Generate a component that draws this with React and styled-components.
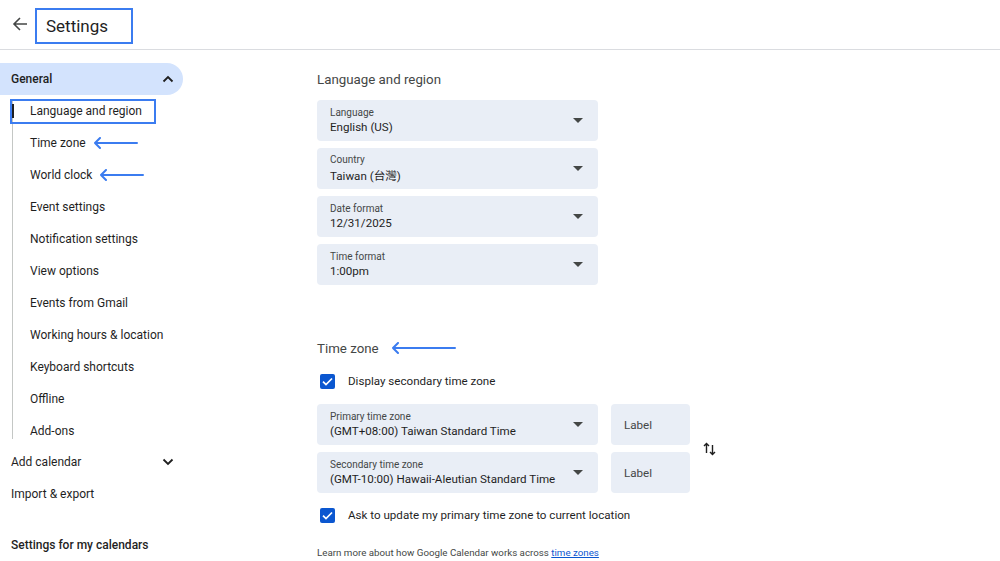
import React from 'react';
import styled, { createGlobalStyle } from 'styled-components';

const GlobalStyle = createGlobalStyle`
  body {
    margin: 0;
    background: #fff;
    font-family: Roboto, "Noto Sans", "Noto Sans CJK TC", sans-serif;
    color: #1f1f1f;
  }
`;

const ANNOT = '#3b7cf0';

const subItems = [
  'Language and region',
  'Time zone',
  'World clock',
  'Event settings',
  'Notification settings',
  'View options',
  'Events from Gmail',
  'Working hours & location',
  'Keyboard shortcuts',
  'Offline',
  'Add-ons',
];

const langFields = [
  { label: 'Language', value: 'English (US)' },
  { label: 'Country', value: 'Taiwan (台灣)' },
  { label: 'Date format', value: '12/31/2025' },
  { label: 'Time format', value: '1:00pm' },
];

function Arrow({ width = 46 }) {
  return (
    <svg width={width} height="12" viewBox={`0 0 ${width} 12`}>
      <path
        d={`M${width - 1} 6H2M7 1L2 6l5 5`}
        fill="none"
        stroke={ANNOT}
        strokeWidth="2"
        strokeLinecap="round"
        strokeLinejoin="round"
      />
    </svg>
  );
}

function Caret() {
  return (
    <svg width="10" height="5" viewBox="0 0 10 5">
      <path d="M0 0h10L5 5z" fill="#444746" />
    </svg>
  );
}

function Chevron({ up }) {
  return (
    <svg width="12" height="8" viewBox="0 0 12 8">
      <path
        d={up ? 'M1.5 6.5L6 2l4.5 4.5' : 'M1.5 1.5L6 6l4.5-4.5'}
        fill="none"
        stroke="#1f1f1f"
        strokeWidth="1.8"
      />
    </svg>
  );
}

function Check() {
  return (
    <CheckBox>
      <svg width="11" height="9" viewBox="0 0 11 9">
        <path d="M1 4.6l3 3L10 1.5" fill="none" stroke="#fff" strokeWidth="1.7" />
      </svg>
    </CheckBox>
  );
}

function Select({ label, value }) {
  return (
    <Field>
      <FieldText>
        <FieldLabel>{label}</FieldLabel>
        <FieldValue>{value}</FieldValue>
      </FieldText>
      <Caret />
    </Field>
  );
}

export default function App() {
  return (
    <>
      <GlobalStyle />
      <Header>
        <BackButton>
          <svg width="16" height="16" viewBox="0 0 16 16">
            <path
              d="M15 8H2M8 2L2 8l6 6"
              fill="none"
              stroke="#444746"
              strokeWidth="1.6"
            />
          </svg>
        </BackButton>
        <Title>Settings</Title>
      </Header>
      <Page>
        <Sidebar>
          <GroupHeader active>
            General
            <Chevron up />
          </GroupHeader>
          <SubList>
            {subItems.map((item, i) => (
              <SubItem key={item} selected={i === 0}>
                <SubText boxed={i === 0}>{item}</SubText>
                {(i === 1 || i === 2) && <Arrow width={45} />}
              </SubItem>
            ))}
          </SubList>
          <GroupHeader>
            Add calendar
            <Chevron />
          </GroupHeader>
          <GroupHeader>Import &amp; export</GroupHeader>
          <SectionLabel>Settings for my calendars</SectionLabel>
        </Sidebar>
        <Main>
          <Heading>Language and region</Heading>
          <FieldStack>
            {langFields.map((f) => (
              <Select key={f.label} label={f.label} value={f.value} />
            ))}
          </FieldStack>

          <Heading spaced>
            Time zone
            <Arrow width={65} />
          </Heading>
          <CheckRow>
            <Check />
            Display secondary time zone
          </CheckRow>
          <TzGrid>
            <Select label="Primary time zone" value="(GMT+08:00) Taiwan Standard Time" />
            <LabelBox>Label</LabelBox>
            <SwapIcon>
              <svg width="13" height="14" viewBox="0 0 13 14">
                <path
                  d="M3.5 11V1.5M1 4l2.5-2.5L6 4M9.5 3v9.5M7 10l2.5 2.5L12 10"
                  fill="none"
                  stroke="#1f1f1f"
                  strokeWidth="1.4"
                />
              </svg>
            </SwapIcon>
            <Select
              label="Secondary time zone"
              value="(GMT-10:00) Hawaii-Aleutian Standard Time"
            />
            <LabelBox>Label</LabelBox>
          </TzGrid>
          <CheckRow>
            <Check />
            Ask to update my primary time zone to current location
          </CheckRow>
          <Note>
            Learn more about how Google Calendar works across <a href="#tz">time zones</a>
          </Note>
        </Main>
      </Page>
    </>
  );
}

const Header = styled.header`
  height: 49px;
  display: flex;
  align-items: center;
  padding-left: 12px;
  border-bottom: 1px solid #dadce0;
  box-sizing: content-box;
`;

const BackButton = styled.div`
  width: 16px;
  height: 16px;
  display: flex;
  margin-right: 7px;
  margin-top: -1px;
`;

const Title = styled.h1`
  margin: 3px 0 0;
  width: 98px;
  height: 36px;
  box-sizing: border-box;
  border: 2px solid ${ANNOT};
  display: flex;
  align-items: center;
  padding-left: 9px;
  font-size: 17px;
  font-weight: 400;
  color: #1f1f1f;
`;

const Page = styled.div`
  display: flex;
`;

const Sidebar = styled.nav`
  width: 317px;
  flex-shrink: 0;
  padding-top: 13px;
`;

const GroupHeader = styled.div`
  width: 183px;
  height: 32px;
  box-sizing: border-box;
  display: flex;
  align-items: center;
  justify-content: space-between;
  padding: 0 9px 0 11px;
  border-radius: 0 16px 16px 0;
  background: ${(p) => (p.active ? '#d3e3fd' : 'transparent')};
  font-size: 12px;
  font-weight: ${(p) => (p.active ? 500 : 400)};
  color: #1f1f1f;
`;

const SubList = styled.div`
  position: relative;
  margin: 0 0 -1px 12px;

  &::before {
    content: '';
    position: absolute;
    left: 0;
    top: 4px;
    bottom: 8px;
    width: 1px;
    background: #c4c7c5;
  }
`;

const SubItem = styled.div`
  position: relative;
  height: 32px;
  display: flex;
  align-items: center;
  gap: 7px;
  padding-left: 18px;
  font-size: 12px;
  color: #1f1f1f;

  &::before {
    content: '';
    display: ${(p) => (p.selected ? 'block' : 'none')};
    position: absolute;
    left: 0;
    top: 9px;
    width: 2px;
    height: 14px;
    background: #1f1f1f;
  }
`;

const SubText = styled.span`
  ${(p) =>
    p.boxed &&
    `
    margin-left: -20px;
    padding: 3px 12px 4px 18px;
    border: 2px solid ${ANNOT};
  `}
`;

const SectionLabel = styled.div`
  margin-top: 28px;
  padding-left: 11px;
  font-size: 12px;
  font-weight: 500;
  color: #1f1f1f;
`;

const Main = styled.main`
  flex: 1;
  padding-top: 19px;
`;

const Heading = styled.h2`
  margin: ${(p) => (p.spaced ? '53px 0 13px' : '0 0 11px')};
  height: 20px;
  display: flex;
  align-items: center;
  gap: 12px;
  font-size: 13.3px;
  font-weight: 400;
  color: #444746;
`;

const FieldStack = styled.div`
  display: flex;
  flex-direction: column;
  gap: 7px;
  width: 281px;
`;

const Field = styled.div`
  height: 41px;
  box-sizing: border-box;
  background: #e9eef6;
  border-radius: 4px;
  display: flex;
  align-items: center;
  justify-content: space-between;
  padding: 0 15px 0 13px;
`;

const FieldText = styled.div`
  display: flex;
  flex-direction: column;
  gap: 2px;
`;

const FieldLabel = styled.span`
  font-size: 10px;
  color: #444746;
`;

const FieldValue = styled.span`
  font-size: 11.6px;
  color: #1f1f1f;
`;

const CheckRow = styled.label`
  display: flex;
  align-items: center;
  gap: 13px;
  padding-left: 3px;
  height: 20px;
  font-size: 11.6px;
  color: #1f1f1f;
`;

const CheckBox = styled.span`
  width: 15px;
  height: 15px;
  border-radius: 2px;
  background: #0b57d0;
  display: flex;
  align-items: center;
  justify-content: center;
`;

const TzGrid = styled.div`
  display: grid;
  grid-template-columns: 281px 79px auto;
  grid-template-rows: 41px 41px;
  column-gap: 13px;
  row-gap: 7px;
  margin: 13px 0 12px;
`;

const LabelBox = styled.div`
  background: #e9eef6;
  border-radius: 4px;
  display: flex;
  align-items: center;
  padding-left: 13px;
  font-size: 11.6px;
  color: #444746;
`;

const SwapIcon = styled.div`
  grid-row: 1 / span 2;
  grid-column: 3;
  align-self: center;
  display: flex;
`;

const Note = styled.p`
  margin: 22px 0 0;
  font-size: 9.75px;
  color: #444746;

  a {
    color: #0b57d0;
  }
`;
